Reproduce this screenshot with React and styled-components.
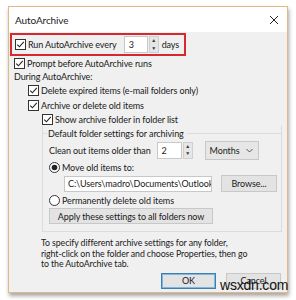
import React from "react";
import styled, { createGlobalStyle } from "styled-components";

const Global = createGlobalStyle`
  html, body { margin: 0; padding: 0; background: #ffffff; }
  body { font-family: Lato, "Open Sans", sans-serif; }
  svg { flex-shrink: 0; }
`;

const Page = styled.div`
  width: 296px;
  height: 300px;
  padding: 6px 0 0 8px;
  box-sizing: border-box;
  position: relative;
`;

const Window = styled.div`
  width: 280px;
  height: 287px;
  box-sizing: border-box;
  border: 1px solid #e2b887;
  background: #f0f0f0;
  box-shadow: 1px 3px 4px rgba(0, 0, 0, 0.35);
  display: flex;
  flex-direction: column;
  color: #1a1a1a;
  font-size: 9px;
  letter-spacing: -0.1px;
`;

const TitleBar = styled.div`
  height: 25px;
  background: #ffffff;
  display: flex;
  align-items: center;
  justify-content: space-between;
  padding: 0 8px 0 6px;
  font-size: 10px;
  color: #222;
`;

const Body = styled.div`
  display: flex;
  flex-direction: column;
  padding: 0 5px 0 5px;
`;

const Highlight = styled.div`
  margin: 1px 0 0 -4px;
  width: 176px;
  height: 23px;
  box-sizing: border-box;
  border: 2px solid #d7282f;
  display: flex;
  align-items: center;
  padding-left: 3px;
  gap: 2px;
`;

const Row = styled.div`
  display: flex;
  align-items: center;
  height: ${(p) => p.h || 14}px;
  padding-left: ${(p) => p.indent || 0}px;
  gap: ${(p) => p.gap || 2}px;
  flex-shrink: 0;
`;

const Label = styled.span`
  white-space: nowrap;
  margin-left: ${(p) => p.ml || 0}px;
`;

const SpinBox = styled.div`
  display: flex;
  align-items: stretch;
  height: ${(p) => p.h || 17}px;
  margin-left: ${(p) => p.ml || 0}px;
  flex-shrink: 0;
`;

const SpinField = styled.div`
  width: ${(p) => p.w}px;
  background: #fff;
  border: 1px solid #c8c8c8;
  display: flex;
  align-items: center;
  padding-left: 4px;
  box-sizing: border-box;
`;

const SpinArrows = styled.div`
  width: 10px;
  margin-left: 1px;
  display: flex;
  flex-direction: column;
  background: #e6e6e6;
  border: 1px solid #cfcfcf;
  box-sizing: border-box;
  align-items: center;
  justify-content: space-around;
  font-size: 5px;
  color: #333;
  line-height: 1;
`;

const Group = styled.div`
  margin: 0 0 0 28px;
  width: 240px;
  height: 106px;
  border: 1px solid #dcdcdc;
  border-top: none;
  box-sizing: border-box;
  padding: 0 0 0 6px;
  display: flex;
  flex-direction: column;
`;

const GroupTitle = styled.div`
  height: 14px;
  display: flex;
  align-items: center;
  margin-left: -7px;
  &::before {
    content: "";
    width: 5px;
    border-top: 1px solid #dcdcdc;
    margin-right: 1px;
  }
  &::after {
    content: "";
    flex: 1;
    border-top: 1px solid #dcdcdc;
    margin-left: 3px;
    margin-right: -1px;
  }
`;

const Select = styled.div`
  width: 54px;
  height: 19px;
  box-sizing: border-box;
  border: 1px solid #c8c8c8;
  background: #e6e6e6;
  margin-left: 10px;
  display: flex;
  align-items: center;
  justify-content: space-between;
  padding: 0 5px 0 4px;
`;

const PathField = styled.div`
  width: 148px;
  height: 16px;
  box-sizing: border-box;
  border: 1px solid #c8c8c8;
  background: #fff;
  display: flex;
  align-items: center;
  padding-left: 3px;
  overflow: hidden;
  white-space: nowrap;
`;

const Button = styled.div`
  height: ${(p) => p.h || 16}px;
  width: ${(p) => p.w}px;
  box-sizing: border-box;
  border: 1px solid ${(p) => (p.primary ? "#3c7fb1" : "#c8c8c8")};
  box-shadow: ${(p) => (p.primary ? "inset 0 0 0 1px #7fb7e0" : "none")};
  background: #e3e3e3;
  display: flex;
  align-items: center;
  justify-content: center;
  margin-left: ${(p) => p.ml || 0}px;
  white-space: nowrap;
  flex-shrink: 0;
`;

const Note = styled.div`
  margin: 6px 0 0 27px;
  line-height: 10.5px;
  font-size: 8.8px;
`;

const Footer = styled.div`
  display: flex;
  justify-content: flex-end;
  gap: 10px;
  margin: 3px 1px 0 0;
`;

const Watermark = styled.div`
  position: absolute;
  left: 220px;
  top: 277px;
  font-family: "Liberation Sans", Arial, sans-serif;
  font-size: 14px;
  color: #111;
  letter-spacing: -0.2px;
`;

const Check = () => (
  <svg width="11" height="11" viewBox="0 0 11 11">
    <rect x="0.5" y="0.5" width="10" height="10" fill="#fff" stroke="#333" />
    <path d="M2.3 5.6 L4.4 7.8 L8.8 2.8" fill="none" stroke="#222" strokeWidth="1.1" />
  </svg>
);

const Radio = ({ on }) => (
  <svg width="11" height="11" viewBox="0 0 11 11">
    <circle cx="5.5" cy="5.5" r="5" fill="#fff" stroke="#333" />
    {on && <circle cx="5.5" cy="5.5" r="2.8" fill="#222" />}
  </svg>
);

const Close = () => (
  <svg width="10" height="10" viewBox="0 0 10 10">
    <path d="M1 1 L9 9 M9 1 L1 9" stroke="#222" strokeWidth="1" />
  </svg>
);

const Spin = ({ value, w, ml, h }) => (
  <SpinBox ml={ml} h={h}>
    <SpinField w={w}>{value}</SpinField>
    <SpinArrows>
      <span>▲</span>
      <span>▼</span>
    </SpinArrows>
  </SpinBox>
);

export default function App() {
  return (
    <Page>
      <Global />
      <Window>
        <TitleBar>
          <span>AutoArchive</span>
          <Close />
        </TitleBar>
        <Body>
          <Highlight>
            <Check />
            <Label>Run AutoArchive every</Label>
            <Spin value="3" w={24} ml={5} />
            <Label ml={1}>days</Label>
          </Highlight>
          <Row>
            <Check />
            <Label>Prompt before AutoArchive runs</Label>
          </Row>
          <Row h={13}>
            <Label>During AutoArchive:</Label>
          </Row>
          <Row indent={14} h={15}>
            <Check />
            <Label>Delete expired items (e-mail folders only)</Label>
          </Row>
          <Row indent={14} h={14}>
            <Check />
            <Label>Archive or delete old items</Label>
          </Row>
          <Row indent={28} h={14}>
            <Check />
            <Label>Show archive folder in folder list</Label>
          </Row>
          <Group>
            <GroupTitle>Default folder settings for archiving</GroupTitle>
            <Row h={20}>
              <Label>Clean out items older than</Label>
              <Spin value="2" w={25} ml={4} h={17} />
              <Select>
                <span>Months</span>
                <svg width="7" height="5" viewBox="0 0 7 5">
                  <path d="M0.5 1 L3.5 4 L6.5 1" fill="none" stroke="#555" />
                </svg>
              </Select>
            </Row>
            <Row h={14}>
              <Radio on />
              <Label>Move old items to:</Label>
            </Row>
            <Row h={19} indent={15}>
              <PathField>C:\Users\madro\Documents\Outlook Files\archive.pst</PathField>
              <Button w={56} h={17} ml={7}>Browse...</Button>
            </Row>
            <Row h={14}>
              <Radio />
              <Label>Permanently delete old items</Label>
            </Row>
            <Row h={18}>
              <Button w={164}>Apply these settings to all folders now</Button>
            </Row>
          </Group>
          <Note>
            To specify different archive settings for any folder,
            <br />
            right-click on the folder and choose Properties, then go
            <br />
            to the AutoArchive tab.
          </Note>
          <Footer>
            <Button w={55} h={16} primary>OK</Button>
            <Button w={55} h={16}>Cancel</Button>
          </Footer>
        </Body>
      </Window>
      <Watermark>wsxdn.com</Watermark>
    </Page>
  );
}
